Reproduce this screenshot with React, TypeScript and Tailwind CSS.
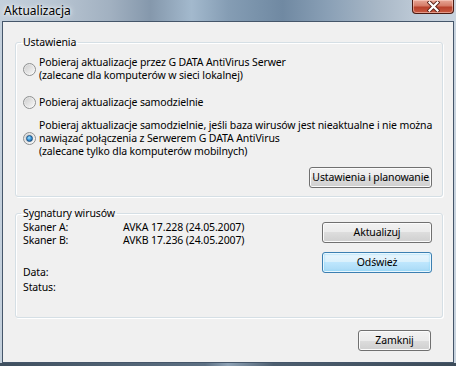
import React from "react";

function Radio({ checked }: { checked?: boolean }) {
  return (
    <div className="relative w-[13px] h-[13px] shrink-0 rounded-full border border-[#8e9091] bg-[linear-gradient(135deg,#dcdcdc,#ffffff)] flex items-center justify-center">
      <div className="w-[9px] h-[9px] rounded-full bg-[linear-gradient(135deg,#cfcfcf,#f6f6f6)] flex items-center justify-center">
        {checked && (
          <div className="w-[7px] h-[7px] rounded-full border border-[#1c5180] bg-[radial-gradient(circle_at_40%_35%,#a8e4fb_0%,#3f9be0_45%,#13508f_100%)]" />
        )}
      </div>
    </div>
  );
}

function Btn({ children, w, primary }: { children: React.ReactNode; w: string; primary?: boolean }) {
  const base =
    "h-[21px] whitespace-nowrap rounded-[3px] border text-[10.5px] leading-[19px] text-center text-black ";
  const normal =
    "border-[#707070] shadow-[inset_0_0_0_1px_#fbfbfb] bg-[linear-gradient(to_bottom,#f2f2f2_0%,#ebebeb_50%,#dddddd_50%,#cfcfcf_100%)]";
  const prim =
    "border-[#3c7fb1] bg-[linear-gradient(to_bottom,#eaf6fd_0%,#d9f0fc_50%,#bee6fd_50%,#a7d9f5_100%)] shadow-[inset_0_0_0_1px_#e8f7ff,inset_0_0_2px_1px_#7fd4f8]";
  return <div className={base + (primary ? prim : normal) + " " + w}>{children}</div>;
}

export default function App() {
  return (
    <div className="w-[456px] h-[366px] flex flex-col overflow-hidden font-['Noto_Sans',sans-serif] text-black bg-[linear-gradient(to_right,#c4d0dc_0%,#b8c5d2_12%,#a2b1c1_24%,#8598ac_33%,#a3b9cd_42%,#859db4_50%,#7a93ab_56%,#7089a2_62%,#8aa0b6_72%,#a9b8c7_83%,#c1cdd9_93%,#c9d4df_100%)]">
      <div className="h-[21px] flex items-start justify-between shrink-0">
        <div className="pl-[4px] pt-[2px] text-[12px] leading-[17px] [text-shadow:0_0_6px_#ffffff,0_0_3px_#ffffff]">
          Aktualizacja
        </div>
        <div className="mr-[2px] w-[42px] h-[14px] rounded-b-[4px] border border-t-0 border-[#4a1a12] bg-[linear-gradient(to_bottom,#e7a797_0%,#d57b67_45%,#b8412b_55%,#c95a42_100%)] shadow-[inset_0_0_0_1px_rgba(255,220,210,0.5)] flex items-center justify-center">
          <svg width="13" height="11" viewBox="0 0 13 11">
            <path d="M2.5 1.5 L10.5 9.5 M10.5 1.5 L2.5 9.5" stroke="#5a2218" strokeWidth="4" strokeLinecap="square" />
            <path d="M2.5 1.5 L10.5 9.5 M10.5 1.5 L2.5 9.5" stroke="#ffffff" strokeWidth="2.2" strokeLinecap="square" />
          </svg>
        </div>
      </div>

      <div className="ml-[2px] w-[452px] h-[342px] shrink-0 border border-[#45566a] bg-[#f0f0f0] flex flex-col text-[10.5px] tracking-[-0.12px] leading-[13px]">
        <fieldset className="ml-[12px] mt-[14px] w-[428px] h-[161px] rounded-[3px] border border-[#d5dfe5] shadow-[inset_1px_1px_0_#ffffff,1px_1px_0_#ffffff] pl-[7px] pr-[10px] flex flex-col">
          <legend className="-ml-[2px] px-[2px] leading-[13px]">Ustawienia</legend>
          <div className="mt-[7px] flex items-center gap-[3px]">
            <Radio />
            <div>
              <div>Pobieraj aktualizacje przez G DATA AntiVirus Serwer</div>
              <div>(zalecane dla komputerów w sieci lokalnej)</div>
            </div>
          </div>
          <div className="mt-[14px] flex items-center gap-[3px]">
            <Radio />
            <div>Pobieraj aktualizacje samodzielnie</div>
          </div>
          <div className="mt-[10px] flex items-center gap-[3px]">
            <Radio checked />
            <div className="whitespace-nowrap">
              <div>Pobieraj aktualizacje samodzielnie, jeśli baza wirusów jest nieaktualne i nie można</div>
              <div>nawiązać połączenia z Serwerem G DATA AntiVirus</div>
              <div>(zalecane tylko dla komputerów mobilnych)</div>
            </div>
          </div>
          <div className="mt-[9px] flex justify-end">
            <Btn w="w-[123px]">Ustawienia i planowanie</Btn>
          </div>
        </fieldset>

        <fieldset className="ml-[12px] mt-[10px] w-[428px] h-[111px] rounded-[3px] border border-[#d5dfe5] shadow-[inset_1px_1px_0_#ffffff,1px_1px_0_#ffffff] pl-[7px] pr-[10px] flex">
          <legend className="-ml-[2px] px-[2px] leading-[13px]">Sygnatury wirusów</legend>
          <div className="flex w-full justify-between">
            <div className="mt-[1px] flex flex-col">
              <div className="flex"><div className="w-[100px]">Skaner A:</div><div>AVKA 17.228 (24.05.2007)</div></div>
              <div className="flex"><div className="w-[100px]">Skaner B:</div><div>AVKB 17.236 (24.05.2007)</div></div>
              <div className="mt-[19px]">Data:</div>
              <div className="mt-[2px]">Status:</div>
            </div>
            <div className="mt-[2px] flex flex-col">
              <Btn w="w-[110px]">Aktualizuj</Btn>
              <div className="mt-[9px]">
                <Btn w="w-[110px]" primary>Odśwież</Btn>
              </div>
            </div>
          </div>
        </fieldset>

        <div className="mt-[12px] mr-[22px] flex justify-end">
          <Btn w="w-[73px]">Zamknij</Btn>
        </div>
      </div>
      <div className="flex-1 bg-[linear-gradient(to_right,#3f4f5e,#5d7083_45%,#8ea2b5_50%,#4d5e6f_60%,#3c4b59)]" />
    </div>
  );
}
